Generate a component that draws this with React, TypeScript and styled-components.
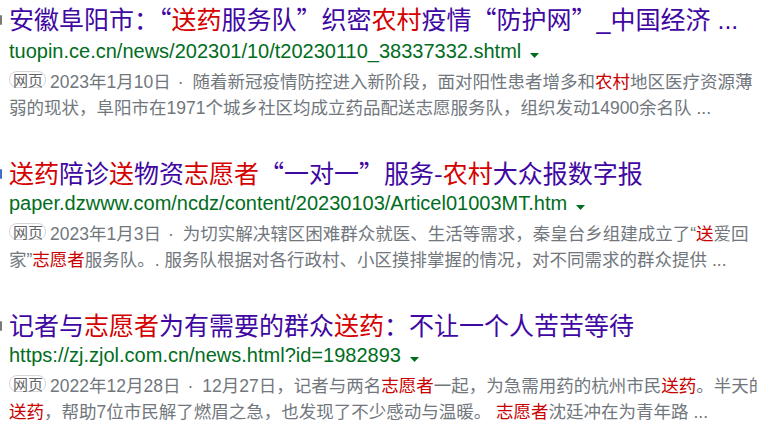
import styled, { createGlobalStyle } from "styled-components";

const GlobalStyle = createGlobalStyle`
  html, body {
    margin: 0;
    padding: 0;
    background: #ffffff;
    overflow: hidden;
  }
`;

const Page = styled.div`
  width: 757px;
  height: 429px;
  overflow: hidden;
  padding: 3px 0 0 9px;
  box-sizing: border-box;
`;

const Result = styled.div<{ $mark: string }>`
  position: relative;
  margin-bottom: 36px;

  &::before {
    content: "";
    position: absolute;
    left: -9px;
    top: 12px;
    width: 2px;
    height: 10px;
    border-radius: 1px;
    background: ${(p) => p.$mark};
  }
`;

const Title = styled.div`
  font-family: "Noto Sans CJK SC", "Liberation Sans", sans-serif;
  font-size: 25px;
  line-height: 30px;
  color: #4007a2;
  white-space: nowrap;
`;

const Tail = styled.span`
  font-family: "Liberation Sans", sans-serif;
`;

const Hl = styled.span<{ $small?: boolean }>`
  color: ${(p) => (p.$small ? "#c80000" : "#d50000")};
`;

const UrlRow = styled.div`
  display: flex;
  align-items: center;
  height: 32px;
  font-family: "Liberation Sans", "Noto Sans CJK SC", sans-serif;
  font-size: 20px;
  color: #006d21;
  white-space: nowrap;
`;

const Caret = styled.svg`
  margin-left: 9px;
  margin-top: 9px;
  flex: none;
`;

const Snippet = styled.div`
  margin-top: 2px;
  font-family: "Liberation Sans", "Noto Sans CJK SC", sans-serif;
  font-size: 17.5px;
  line-height: 26px;
  color: #71777d;
`;

const Line = styled.div`
  white-space: nowrap;
`;

const Badge = styled.span`
  display: inline-block;
  font-family: "Noto Sans CJK SC", sans-serif;
  font-size: 15px;
  line-height: 13px;
  padding: 1px 2px 1px 3px;
  border: 1px solid #d6d6d6;
  border-radius: 8px;
  color: #5f6368;
  vertical-align: 2px;
  margin-right: 4px;
`;

const Dot = styled.span`
  margin: 0 9px 0 7px;
`;

function DownCaret() {
  return (
    <Caret width="9" height="5" viewBox="0 0 9 5">
      <path d="M0 0H9L4.5 5Z" fill="#006d21" />
    </Caret>
  );
}

function Meta({ date }: { date: string }) {
  return (
    <>
      <Badge>网页</Badge>
      {date}
      <Dot>·</Dot>
    </>
  );
}

export default function App() {
  return (
    <>
      <GlobalStyle />
      <Page>
        <Result $mark="#7a7a7a">
          <Title>
            安徽阜阳市：“<Hl>送药</Hl>服务队”织密<Hl>农村</Hl>疫情“防护网”<Tail>_</Tail>中国经济<Tail> ...</Tail>
          </Title>
          <UrlRow>
            tuopin.ce.cn/news/202301/10/t20230110_38337332.shtml
            <DownCaret />
          </UrlRow>
          <Snippet>
            <Line>
              <Meta date="2023年1月10日" />
              随着新冠疫情防控进入新阶段，面对阳性患者增多和<Hl $small>农村</Hl>地区医疗资源薄
            </Line>
            <Line>弱的现状，阜阳市在1971个城乡社区均成立药品配送志愿服务队，组织发动14900余名队 ...</Line>
          </Snippet>
        </Result>

        <Result $mark="#3d6fc4">
          <Title>
            <Hl>送药</Hl>陪诊<Hl>送</Hl>物资<Hl>志愿者</Hl>“一对一”服务-<Hl>农村</Hl>大众报数字报
          </Title>
          <UrlRow>
            paper.dzwww.com/ncdz/content/20230103/Articel01003MT.htm
            <DownCaret />
          </UrlRow>
          <Snippet>
            <Line>
              <Meta date="2023年1月3日" />
              为切实解决辖区困难群众就医、生活等需求，秦皇台乡组建成立了“<Hl $small>送</Hl>爱回
            </Line>
            <Line>
              家”<Hl $small>志愿者</Hl>服务队。. 服务队根据对各行政村、小区摸排掌握的情况，对不同需求的群众提供 ...
            </Line>
          </Snippet>
        </Result>

        <Result $mark="#7a7a7a">
          <Title>
            记者与<Hl>志愿者</Hl>为有需要的群众<Hl>送药</Hl>：不让一个人苦苦等待
          </Title>
          <UrlRow>
            https://zj.zjol.com.cn/news.html?id=1982893
            <DownCaret />
          </UrlRow>
          <Snippet>
            <Line>
              <Meta date="2022年12月28日" />
              12月27日，记者与两名<Hl $small>志愿者</Hl>一起，为急需用药的杭州市民<Hl $small>送药</Hl>。半天的
            </Line>
            <Line>
              <Hl $small>送药</Hl>，帮助7位市民解了燃眉之急，也发现了不少感动与温暖。 <Hl $small>志愿者</Hl>沈廷冲在为青年路 ...
            </Line>
          </Snippet>
        </Result>
      </Page>
    </>
  );
}
